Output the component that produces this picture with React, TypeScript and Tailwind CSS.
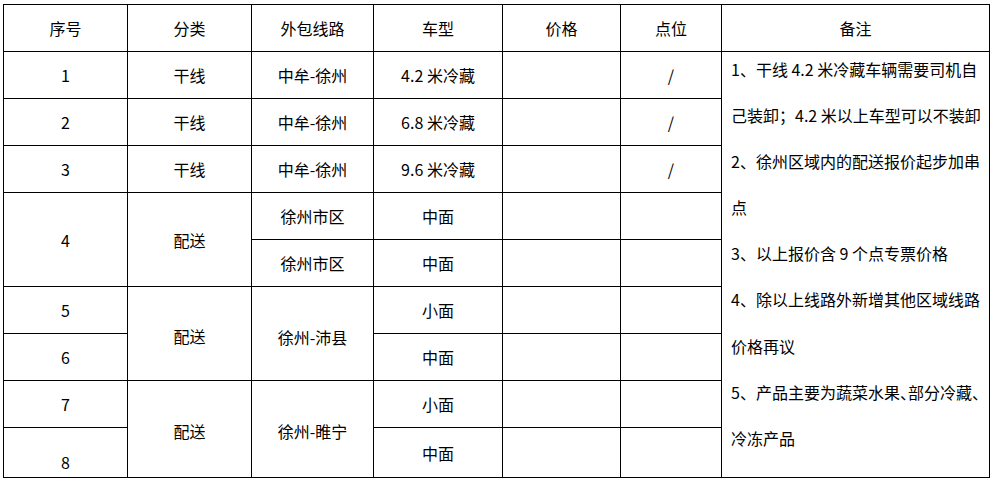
import React from 'react';

type CellProps = {
  children?: React.ReactNode;
  className?: string;
};

const Cell: React.FC<CellProps> = ({ children, className = '' }) => (
  <div className={`bg-white flex items-center justify-center leading-none ${className}`}>{children}</div>
);

const remarks: React.ReactNode[] = [
  '1、干线 4.2 米冷藏车辆需要司机自',
  '己装卸；4.2 米以上车型可以不装卸',
  '2、徐州区域内的配送报价起步加串',
  '点',
  '3、以上报价含 9 个点专票价格',
  '4、除以上线路外新增其他区域线路',
  '价格再议',
  <>
    5、产品主要为蔬菜水果<span className="[font-feature-settings:'halt']">、</span>部分冷藏<span className="[font-feature-settings:'halt']">、</span>
  </>,
  '冷冻产品',
];

export default function App() {
  return (
    <div className="w-[992px] h-[481px] bg-white text-black text-[16px] font-['Noto_Sans_CJK_SC',sans-serif] overflow-hidden">
      <div className="ml-[3px] mt-[4px] w-fit grid grid-cols-[123px_123px_121px_128px_117px_100px_267px] grid-rows-[46px_46px_46px_46px_46px_46px_46px_46px_46px_49px] gap-px p-px bg-black">
        {/* header */}
        <Cell>序号</Cell>
        <Cell>分类</Cell>
        <Cell>外包线路</Cell>
        <Cell>车型</Cell>
        <Cell>价格</Cell>
        <Cell>点位</Cell>
        <Cell>备注</Cell>

        {/* 干线 */}
        <Cell>1</Cell>
        <Cell>干线</Cell>
        <Cell>中牟-徐州</Cell>
        <Cell>4.2 米冷藏</Cell>
        <Cell />
        <Cell>/</Cell>
        <div className="row-span-9 bg-white flex flex-col pl-[9px] whitespace-nowrap">
          {remarks.map((line, i) => (
            <div key={i} className="h-[46.1px] shrink-0 pt-[9px] leading-[16px]">
              {line}
            </div>
          ))}
        </div>

        <Cell>2</Cell>
        <Cell>干线</Cell>
        <Cell>中牟-徐州</Cell>
        <Cell>6.8 米冷藏</Cell>
        <Cell />
        <Cell>/</Cell>

        <Cell>3</Cell>
        <Cell>干线</Cell>
        <Cell>中牟-徐州</Cell>
        <Cell>9.6 米冷藏</Cell>
        <Cell />
        <Cell>/</Cell>

        {/* 配送 徐州市区 */}
        <Cell className="row-span-2">4</Cell>
        <Cell className="row-span-2">配送</Cell>
        <Cell>徐州市区</Cell>
        <Cell>中面</Cell>
        <Cell />
        <Cell />
        <Cell>徐州市区</Cell>
        <Cell>中面</Cell>
        <Cell />
        <Cell />

        {/* 配送 徐州-沛县 */}
        <Cell>5</Cell>
        <Cell className="row-span-2 pt-[4px]">配送</Cell>
        <Cell className="row-span-2 pt-[6px]">徐州-沛县</Cell>
        <Cell>小面</Cell>
        <Cell />
        <Cell />
        <Cell>6</Cell>
        <Cell>中面</Cell>
        <Cell />
        <Cell />

        {/* 配送 徐州-睢宁 */}
        <Cell>7</Cell>
        <Cell className="row-span-2 pt-[4px]">配送</Cell>
        <Cell className="row-span-2 pt-[4px]">徐州-睢宁</Cell>
        <Cell>小面</Cell>
        <Cell />
        <Cell />
        <Cell className="items-end pb-[7px]">8</Cell>
        <Cell>中面</Cell>
        <Cell />
        <Cell />
      </div>
    </div>
  );
}
